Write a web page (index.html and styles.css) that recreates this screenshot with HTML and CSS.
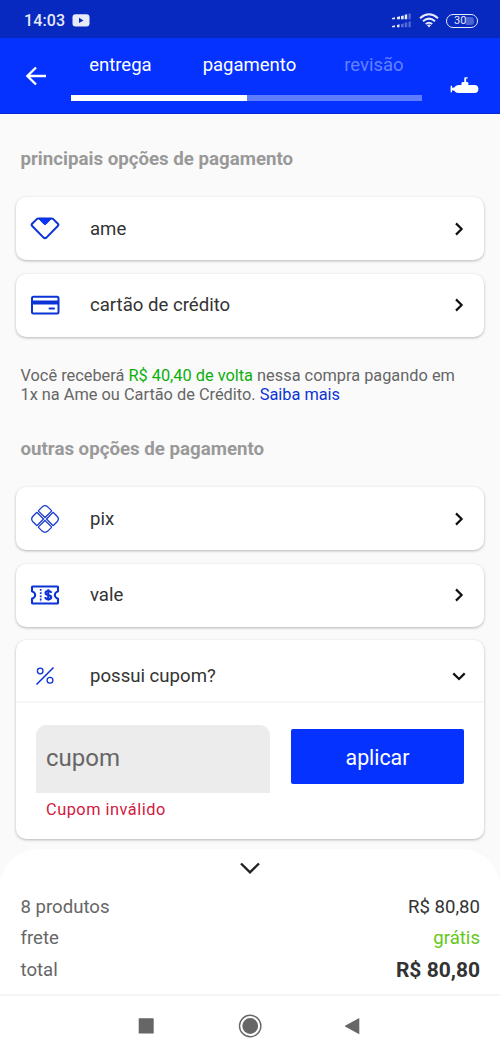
FILE: index.html
```html
<!DOCTYPE html>
<html lang="pt-BR">
<head>
<meta charset="utf-8">
<meta name="viewport" content="width=device-width, initial-scale=1">
<title>Pagamento</title>
<link rel="stylesheet" href="styles.css">
</head>
<body>
<div class="screen">
  <div class="status">
    <span class="clock">14:03</span>
    <svg class="tube" width="18" height="13" viewBox="0 0 18 13"><rect x=".5" y=".3" width="17" height="12.2" rx="3" fill="#e6eafa"/><path d="M7 3.800v5.200l4.500-2.600z" fill="#0829c0"/></svg>
    <svg class="signal" width="20" height="16" viewBox="0 0 20 16" fill="#e6eafa"><path d="M0 4.900l3-.6v2H0zM5 3.900l3-.6v3H5zM9 2.900l2.700-.5v3.900H9zM12.700 1.800l2.500-.6v5.100h-2.500z"/><path opacity=".35" d="M16.500.8l2.200-.5v6h-2.200zM9 10.900l2.700-.5v3.900H9zM12.700 9.800l2.500-.6v5.100h-2.500zM16.500 8.800l2.200-.5v6h-2.200z"/><path d="M0 12.900l3-.6v2H0zM5 11.900l2.500-.6v3H5z"/></svg>
    <svg class="wifi" width="20" height="15" viewBox="0 0 20 15" fill="none" stroke="#e6eafa" stroke-width="2"><path d="M1 5.200Q10-2.600 19 5.200M4 8.200Q10 3.100 16 8.200M6.800 11Q10 8.400 13.200 11"/><path d="M8 12.200Q10 10.800 12 12.200L10 14.500z" fill="#e6eafa" stroke="none"/></svg>
    <span class="battery">30<i></i></span>
  </div>
  <header class="header">
    <svg class="back" width="22" height="20" viewBox="0 0 22 20" fill="none" stroke="#fff" stroke-width="2.400"><path d="M21 10H2M11 1.500L2.400 10l8.600 8.500"/></svg>
    <div class="steps">
      <div class="labels"><span>entrega</span><span>pagamento</span><span class="next">revisão</span></div>
      <div class="track"><div class="done"></div></div>
    </div>
    <svg class="sub" width="30" height="18" viewBox="0 0 30 18" fill="#fff"><path d="M14.300 5V1.300q0-1 1-1h2.400v1.300h-1.600V5h.9q1.400 0 1.400 1.300V8h6a4 4 0 0 1 0 8H8.500q-3 0-4.200-2.200L2 13.200V15.300H.6V8.700H2v2.100l2.300-.4Q5.500 8.200 8.500 8h3V6.300Q11.500 5 12.700 5z"/></svg>
  </header>
  <main class="content">
    <h2 class="title">principais opções de pagamento</h2>
    <section class="list">
      <div class="card row">
        <svg class="icon" width="30" height="30" viewBox="0 .5 30 30" fill="none" stroke="#0b33d6" stroke-width="2" stroke-linejoin="round"><path d="M8.500 5h13q1 0 1.700.6l4.700 4.600q1 1.200-.1 2.300L16.400 24.100q-1.400 1.100-2.800 0L2.200 12.500q-1.100-1.100-.1-2.300l4.700-4.600Q7.500 5 8.500 5z"/><path d="M8.500 5h13L16 10.700q-1 .8-2 0z" fill="#0b33ff" stroke-width="1"/></svg>
        <span class="name">ame</span>
        <svg class="chev" width="14" height="14" viewBox="0 0 14 14"><path d="M4 1.400L9.600 7 4 12.600"/></svg>
      </div>
      <div class="card row">
        <svg class="icon" width="30" height="30" viewBox="0 0 30 30" fill="none" stroke="#0b33d6" stroke-width="2"><rect x="2" y="6.800" width="26.500" height="16.600" rx="1.500"/><path d="M2 12.500h26.500" stroke-width="4"/><path d="M19.500 18.500h4.500" stroke-width="2" stroke-linecap="round"/></svg>
        <span class="name">cartão de crédito</span>
        <svg class="chev" width="14" height="14" viewBox="0 0 14 14"><path d="M4 1.400L9.600 7 4 12.600"/></svg>
      </div>
    </section>
    <p class="note">Você receberá <b>R$ 40,40 de volta</b> nessa compra pagando em<br>1x na Ame ou Cartão de Crédito. <a>Saiba mais</a></p>
    <h2 class="title">outras opções de pagamento</h2>
    <section class="list">
      <div class="card row">
        <svg class="icon" width="30" height="30" viewBox="0 0 30 30" fill="none" stroke="#1a3ccc" stroke-width="1.300"><path id="petal" d="M15 13.500L8.700 7.400q-.5-.5 0-1L12.200 2.900Q15 .4 17.800 2.900l3.500 3.500q.5.5 0 1z"/><use href="#petal" transform="rotate(90 15 15)"/><use href="#petal" transform="rotate(180 15 15)"/><use href="#petal" transform="rotate(270 15 15)"/></svg>
        <span class="name">pix</span>
        <svg class="chev" width="14" height="14" viewBox="0 0 14 14"><path d="M4 1.400L9.600 7 4 12.600"/></svg>
      </div>
      <div class="card row">
        <svg class="icon" width="30" height="30" viewBox="0 0 30 30" fill="none" stroke="#0b33d6" stroke-width="2.100"><path d="M2.500 6.500h25q.5 0 .5.500v4.200l-1.500.8q-1.700 1.300-1.700 3t1.700 3l1.500.8V23q0 .5-.5.500h-25Q2 23.500 2 23v-4.200l1.500-.8q1.700-1.300 1.700-3T3.500 12L2 11.200V7q0-.5.500-.5z" stroke-linejoin="round"/><path d="M10.700 9v13" stroke-width="1.700" stroke-dasharray="1.800 1.400"/><path d="M21.200 12.800q-.3-1.800-3-1.800-2.700 0-2.700 1.900 0 1.600 2.800 2.100 2.900.5 2.900 2.200 0 1.900-2.900 1.900-2.800 0-3.100-2M18.300 9.200v11.600"/></svg>
        <span class="name">vale</span>
        <svg class="chev" width="14" height="14" viewBox="0 0 14 14"><path d="M4 1.400L9.600 7 4 12.600"/></svg>
      </div>
      <div class="card coupon">
        <div class="row coupon-head">
          <svg class="icon" width="30" height="30" viewBox="0 0 30 30" fill="none" stroke="#0b33d6" stroke-width="1.600"><path d="M6.500 23.500l17-17"/><circle cx="10.200" cy="10" r="2.800" stroke-width="1.300"/><circle cx="20" cy="19.200" r="2.900" stroke-width="1.300"/></svg>
          <span class="name">possui cupom?</span>
          <svg class="chev" width="14" height="14" viewBox="0 0 14 14"><path d="M1.300 4.400L7 10l5.700-5.600"/></svg>
        </div>
        <div class="coupon-body">
          <div class="field"><div class="input">cupom</div><div class="error">Cupom inválido</div></div>
          <div class="apply">aplicar</div>
        </div>
      </div>
      <div class="card row"></div>
    </section>
  </main>
  <section class="summary">
    <svg class="expand" width="20" height="12" viewBox="0 0 20 12" fill="none" stroke="#222" stroke-width="2.400"><path d="M1 1.500l9 8.800 9-8.800"/></svg>
    <div class="line"><span>8 produtos</span><span class="amount">R$ 80,80</span></div>
    <div class="line"><span>frete</span><span class="free">grátis</span></div>
    <div class="line total"><span>total</span><strong>R$ 80,80</strong></div>
  </section>
  <nav class="nav">
    <svg width="24" height="24" viewBox="0 0 24 24"><rect x="4.700" y="4.300" width="15" height="15.300" rx=".6" fill="#666"/></svg>
    <svg width="24" height="24" viewBox="0 0 24 24"><circle cx="12.200" cy="12" r="10.700" fill="none" stroke="#666" stroke-width="1.400"/><circle cx="12.200" cy="12" r="7.900" fill="#666"/></svg>
    <svg width="24" height="24" viewBox="0 0 24 24"><path d="M17.300 4v16.300L3 12.500v-.8z" fill="#666"/></svg>
  </nav>
</div>
</body>
</html>
```
FILE: styles.css
```css
* { box-sizing: border-box; }
body { margin: 0; font-family: Roboto, "Liberation Sans", sans-serif; background: #fafafa; }
svg { display: block; flex: none; }
.screen { width: 500px; height: 1056px; display: flex; flex-direction: column; overflow: hidden; }
.status { height: 38px; flex: none; background: #0829c0; display: flex; align-items: center; padding: 3px 22px 0 24px; color: #e6eafa; }
.clock { font-size: 16px; font-weight: 500; letter-spacing: .1px; }
.tube { margin-left: 7px; margin-top: -1px; }
.signal { margin-left: auto; }
.wifi { margin: 0 7px 0 7px; }
.battery { width: 32px; height: 14px; border: 1.500px solid #e6eafa; border-radius: 7px; font-size: 11px; line-height: 12px; padding-left: 7px; display: flex; align-items: center; }
.battery i { width: 8px; height: 8px; background: #4a65d0; border-radius: 0 3px 3px 0; }
.header { height: 76px; flex: none; background: #0532ff; display: flex; padding-left: 25px; color: #fff; border-bottom: 1px solid #0829d0; }
.back { margin-top: 28px; }
.steps { width: 351px; margin-left: 24px; }
.labels { height: 57px; display: flex; padding: 16px 18px 0 18.200px; gap: 51px; font-size: 18.500px; line-height: 23px; }
.next { color: #6481ff; margin-left: -3px; }
.track { height: 6px; background: #5d7cff; }
.done { width: 50%; height: 6px; background: #fff; }
.sub { margin: 39px 0 0 28px; }
.content { flex: 1; min-height: 0; padding: 34px 16px 0 15.500px; }
.title { margin: 0 0 26px 5px; font-size: 18.700px; line-height: 23px; font-weight: 700; color: #999; }
.list { display: flex; flex-direction: column; gap: 13.500px; }
.card { background: #fff; border-radius: 10px; box-shadow: 0 1px 3px rgba(0,0,0,.28); }
.row { height: 63px; display: flex; align-items: center; padding: 0 18px 0 14.500px; font-size: 18.600px; color: #333; }
.name { margin-left: 30px; flex: 1; }
.chev { fill: none; stroke: #111; stroke-width: 2.200; }
.note { margin: 29.500px 0 34px 5px; font-size: 16.350px; line-height: 19px; color: #666; }
.note b { font-weight: 400; color: #0caf0c; }
.note a { color: #0b33d6; }
.coupon { height: 199px; }
.coupon-head { padding-top: 10px; border-bottom: 2px solid #f7f7f7; }
.coupon-body { display: flex; padding: 21.500px 20px 0 20.500px; gap: 21px; }
.field { width: 234px; }
.input { height: 68px; background: #ececec; border-radius: 10px 10px 0 0; padding-left: 10px; line-height: 67px; font-size: 24px; color: #666; }
.error { padding: 7px 0 0 10px; line-height: 20px; font-size: 16.350px; letter-spacing: .5px; color: #d0193f; }
.apply { flex: 1; height: 55px; margin-top: 4px; background: #0532ff; border-radius: 2px; color: #fff; text-align: center; line-height: 57px; font-size: 21.300px; }
.summary { position: relative; flex: none; height: 147px; background: #fff; border-radius: 38px 38px 0 0; border-bottom: 2px solid #f5f5f5; padding: 13px 20px 0 20.500px; }
.expand { margin: 0 auto 17px; }
.line { display: flex; justify-content: space-between; align-items: center; height: 31px; font-size: 18.600px; color: #666; }
.amount, .total strong { color: #333; }
.free { color: #63c81c; }
.total { height: 33px; }
.total strong { font-size: 21px; }
.nav { flex: none; height: 60px; background: #fff; display: flex; justify-content: center; gap: 80px; padding-top: 18px; }
```
